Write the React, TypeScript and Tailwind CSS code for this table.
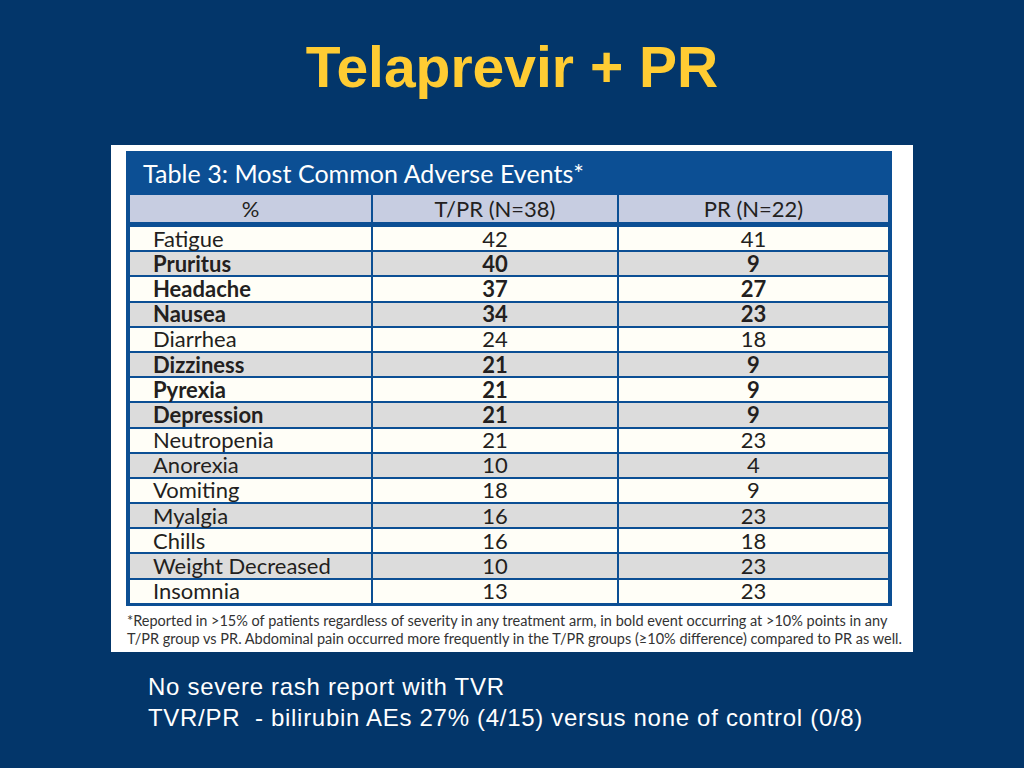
const ROWS: { name: string; tpr: string; pr: string; bold?: boolean }[] = [
  { name: "Fatigue", tpr: "42", pr: "41" },
  { name: "Pruritus", tpr: "40", pr: "9", bold: true },
  { name: "Headache", tpr: "37", pr: "27", bold: true },
  { name: "Nausea", tpr: "34", pr: "23", bold: true },
  { name: "Diarrhea", tpr: "24", pr: "18" },
  { name: "Dizziness", tpr: "21", pr: "9", bold: true },
  { name: "Pyrexia", tpr: "21", pr: "9", bold: true },
  { name: "Depression", tpr: "21", pr: "9", bold: true },
  { name: "Neutropenia", tpr: "21", pr: "23" },
  { name: "Anorexia", tpr: "10", pr: "4" },
  { name: "Vomiting", tpr: "18", pr: "9" },
  { name: "Myalgia", tpr: "16", pr: "23" },
  { name: "Chills", tpr: "16", pr: "18" },
  { name: "Weight Decreased", tpr: "10", pr: "23" },
  { name: "Insomnia", tpr: "13", pr: "23" },
];

export default function App() {
  return (
    <div className="w-[1024px] h-[768px] bg-[#03366a] flex flex-col items-center font-['Liberation_Sans',Arial,sans-serif]">
      <h1 className="mt-[35px] text-[57px] leading-[64px] font-bold text-[#ffcc33]">Telaprevir + PR</h1>

      {/* table image */}
      <div className="mt-[46px] w-[802px] h-[507px] bg-white pl-[15px] pr-[21px] pt-[6px] font-['Lato','Open_Sans',sans-serif]">
        <div className="bg-[#0c4f94] px-[4px] pb-[3px]">
          <div className="h-[44px] pl-[13px] pt-[1px] flex items-center text-white text-[25px] tracking-[0.05px]">
            Table 3: Most Common Adverse Events*
          </div>
          <div className="grid grid-cols-[241px_244px_1fr] gap-x-[2px] h-[27px] mb-[5px] text-[#231f20] text-[22px] leading-none">
            <div className="bg-[#c7cde1] flex items-center justify-center">%</div>
            <div className="bg-[#c7cde1] flex items-center justify-center">T/PR (N=38)</div>
            <div className="bg-[#c7cde1] flex items-center justify-center">PR (N=22)</div>
          </div>
          <div className="flex flex-col gap-[2px]">
            {ROWS.map((r, i) => {
              const bg = i % 2 === 0 ? "bg-[#fffef7]" : "bg-[#dcdcdc]";
              const weight = r.bold ? "font-bold" : "font-normal";
              return (
                <div
                  key={r.name}
                  className={`grid grid-cols-[241px_244px_1fr] gap-x-[2px] h-[23.2px] text-[22px] leading-none text-[#231f20] ${weight}`}
                >
                  <div className={`${bg} flex items-center pl-[23px]`}>{r.name}</div>
                  <div className={`${bg} flex items-center justify-center`}>{r.tpr}</div>
                  <div className={`${bg} flex items-center justify-center`}>{r.pr}</div>
                </div>
              );
            })}
          </div>
        </div>
        <p className="mt-[6px] pl-[1px] text-[14.5px] leading-[18px] text-[#333333] whitespace-nowrap">
          *Reported in &gt;15% of patients regardless of severity in any treatment arm, in bold event occurring at &gt;10% points in any
          <br />
          T/PR group vs PR. Abdominal pain occurred more frequently in the T/PR groups (≥10% difference) compared to PR as well.
        </p>
      </div>

      <div className="self-start ml-[148px] mt-[19px] text-white text-[24px] leading-[31px] tracking-[0.7px]">
        <p>No severe rash report with TVR</p>
        <p className="whitespace-pre">TVR/PR  - bilirubin AEs 27% (4/15) versus none of control (0/8)</p>
      </div>
    </div>
  );
}
